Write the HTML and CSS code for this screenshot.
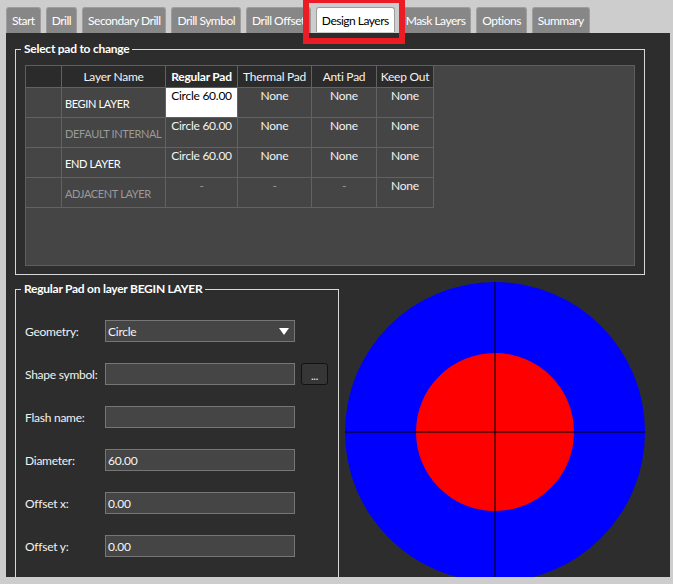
FILE: index.html
```html
<!DOCTYPE html>
<html>
<head>
<meta charset="utf-8">
<link rel="stylesheet" href="styles.css">
</head>
<body>
<div class="window">
  <div class="tabs">
    <div class="tab">Start</div>
    <div class="tab">Drill</div>
    <div class="tab">Secondary Drill</div>
    <div class="tab">Drill Symbol</div>
    <div class="tab">Drill Offset</div>
    <div class="tab active">Design Layers</div>
    <div class="tab">Mask Layers</div>
    <div class="tab">Options</div>
    <div class="tab">Summary</div>
  </div>
  <div class="panel">
    <fieldset class="group group-pads">
      <legend>Select pad to change</legend>
      <div class="padgrid">
        <div class="cell head"></div>
        <div class="cell head">Layer Name</div>
        <div class="cell head strong">Regular Pad</div>
        <div class="cell head">Thermal Pad</div>
        <div class="cell head">Anti Pad</div>
        <div class="cell head">Keep Out</div>

        <div class="cell"></div>
        <div class="cell name">BEGIN LAYER</div>
        <div class="cell pad selected">Circle 60.00</div>
        <div class="cell pad">None</div>
        <div class="cell pad">None</div>
        <div class="cell pad">None</div>

        <div class="cell"></div>
        <div class="cell name dim">DEFAULT INTERNAL</div>
        <div class="cell pad">Circle 60.00</div>
        <div class="cell pad">None</div>
        <div class="cell pad">None</div>
        <div class="cell pad">None</div>

        <div class="cell"></div>
        <div class="cell name">END LAYER</div>
        <div class="cell pad">Circle 60.00</div>
        <div class="cell pad">None</div>
        <div class="cell pad">None</div>
        <div class="cell pad">None</div>

        <div class="cell"></div>
        <div class="cell name dim">ADJACENT LAYER</div>
        <div class="cell pad dim">-</div>
        <div class="cell pad dim">-</div>
        <div class="cell pad dim">-</div>
        <div class="cell pad">None</div>
      </div>
    </fieldset>

    <div class="lower">
      <fieldset class="group group-pad">
        <legend>Regular Pad on layer BEGIN LAYER</legend>
        <div class="form">
          <div class="label">Geometry:</div>
          <div class="field select"><span>Circle</span><span class="arrow"></span></div>
          <div></div>

          <div class="label">Shape symbol:</div>
          <div class="field"></div>
          <div class="browse">...</div>

          <div class="label">Flash name:</div>
          <div class="field"></div>
          <div></div>

          <div class="label">Diameter:</div>
          <div class="field">60.00</div>
          <div></div>

          <div class="label">Offset x:</div>
          <div class="field">0.00</div>
          <div></div>

          <div class="label">Offset y:</div>
          <div class="field">0.00</div>
          <div></div>
        </div>
      </fieldset>
      <svg class="preview" width="300" height="300" viewBox="0 0 300 300">
        <circle cx="150" cy="150" r="150" fill="#0000ff"/>
        <circle cx="150" cy="150" r="79" fill="#ff0000"/>
        <line x1="150" y1="0" x2="150" y2="300" stroke="rgba(0,0,0,0.55)" stroke-width="2"/>
        <line x1="0" y1="150" x2="300" y2="150" stroke="rgba(0,0,0,0.55)" stroke-width="2"/>
      </svg>
    </div>
  </div>
  <div class="highlight"></div>
</div>
</body>
</html>
```

FILE: styles.css
```css
html, body {
  margin: 0;
  padding: 0;
}
body {
  background: #cdcdcd;
  font-family: Lato, "Noto Sans", sans-serif;
  font-size: 12px;
  letter-spacing: -0.25px;
  color: #f2f2f2;
  width: 673px;
  height: 584px;
  overflow: hidden;
}
.window {
  position: relative;
  height: 584px;
}
.tabs {
  display: flex;
  gap: 5px;
  padding: 7px 0 0 6px;
  height: 26px;
}
.tab {
  height: 26px;
  box-sizing: border-box;
  padding: 0 5px;
  display: flex;
  align-items: center;
  background: #878787;
  border: 1px solid #9d9d9d;
  border-bottom: none;
  border-radius: 3px 3px 0 0;
  color: #ffffff;
  white-space: nowrap;
  letter-spacing: -0.5px;
}
.tab.active {
  background: #ffffff;
  color: #000000;
  height: 25px;
}
.panel {
  background: #2d2d2d;
  margin: 0 3px 0 6px;
  height: 544px;
  box-sizing: border-box;
  padding: 8px 0 0 9px;
  overflow: hidden;
}
.group {
  margin: 0;
  border: 1px solid #d8d8d8;
  box-sizing: border-box;
  min-width: 0;
}
.group legend {
  font-weight: bold;
  line-height: 16px;
  padding: 0 3px;
  margin-left: -4px;
  color: #ffffff;
}
.group-pads {
  width: 630px;
  padding: 8px 9px 8px 9px;
}
.padgrid {
  height: 201px;
  box-sizing: border-box;
  background: #454545;
  border: 1px solid #5e5e5e;
  display: grid;
  grid-template-columns: 36px 104px 72px 74px 65px 57px;
  grid-template-rows: 22px 30px 30px 30px 30px;
  align-content: start;
  justify-content: start;
}
.cell {
  box-sizing: border-box;
  border-right: 1px solid #626262;
  border-bottom: 1px solid #626262;
  white-space: nowrap;
  overflow: hidden;
}
.cell.head {
  background: #2b2b2b;
  display: flex;
  align-items: center;
  justify-content: center;
  color: #f2f2f2;
}
.cell.head.strong {
  font-weight: bold;
  color: #ffffff;
}
.cell.name {
  display: flex;
  align-items: center;
  padding-left: 3px;
  padding-top: 1px;
  color: #ffffff;
  font-size: 11px;
  letter-spacing: -0.35px;
}
.cell.pad {
  text-align: center;
  padding-top: 0;
  line-height: 15px;
  color: #f2f2f2;
}
.cell.dim {
  color: #9a9a9a;
}
.cell.selected {
  background: #ffffff;
  color: #000000;
}
.lower {
  display: flex;
  align-items: flex-start;
  gap: 6px;
  margin-top: 6px;
}
.group-pad {
  width: 324px;
  height: 330px;
  padding: 23px 9px 0 9px;
  flex: none;
}
.preview {
  display: block;
  flex: none;
  margin-top: 1px;
}
.form {
  display: grid;
  grid-template-columns: 80px 190px auto;
  grid-auto-rows: 22px;
  row-gap: 21px;
  align-items: center;
}
.label {
  color: #f2f2f2;
  white-space: nowrap;
}
.field {
  height: 22px;
  box-sizing: border-box;
  background: #454545;
  border: 1px solid #767676;
  display: flex;
  align-items: center;
  padding: 0 5px 0 2px;
  color: #f5f5f5;
}
.select {
  justify-content: space-between;
}
.arrow {
  width: 0;
  height: 0;
  border-left: 5.5px solid transparent;
  border-right: 5.5px solid transparent;
  border-top: 7px solid #ffffff;
}
.browse {
  margin-left: 6px;
  width: 27px;
  height: 22px;
  box-sizing: border-box;
  background: #363636;
  border: 1px solid #121212;
  border-radius: 3px;
  display: flex;
  align-items: center;
  justify-content: center;
  color: #f2f2f2;
  font-size: 11px;
  line-height: 1;
  padding-top: 3px;
}
.highlight {
  position: absolute;
  left: 303px;
  top: -3px;
  width: 102px;
  height: 47px;
  box-sizing: border-box;
  border: 6px solid #ec1c24;
}
```
